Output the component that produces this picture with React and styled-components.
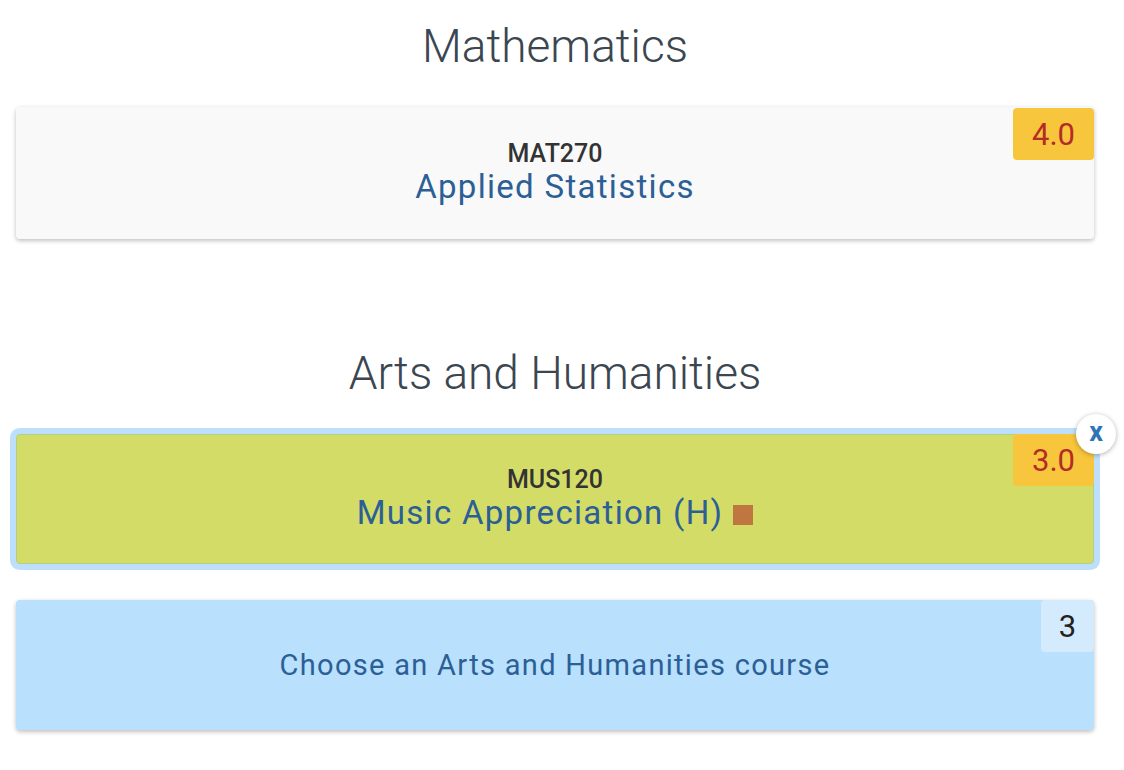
import React from "react";
import styled, { createGlobalStyle } from "styled-components";

const GlobalStyle = createGlobalStyle`
  html, body {
    margin: 0;
    padding: 0;
    background: #ffffff;
    font-family: Roboto, "Liberation Sans", sans-serif;
  }
`;

const Page = styled.div`
  width: 1078px;
  padding: 0 30px 40px 16px;
`;

const Section = styled.section`
  display: flex;
  flex-direction: column;
  gap: 36px;
  margin-top: ${(p) => (p.$first ? "18px" : "106px")};
`;

const Heading = styled.h2`
  margin: 0 0 -3px;
  font-size: 46px;
  line-height: 56px;
  font-weight: 300;
  color: #3b4651;
  text-align: center;
`;

const Card = styled.div`
  position: relative;
  box-sizing: border-box;
  height: ${(p) => p.$height || 132}px;
  border-radius: 4px;
  background: ${(p) => p.$bg};
  border: ${(p) => (p.$selected ? "1px solid #b3cf86" : "none")};
  box-shadow: ${(p) =>
    p.$selected
      ? "0 0 0 6px #bddffb"
      : "0 2px 4px rgba(0, 0, 0, 0.22), 0 0 6px rgba(0, 0, 0, 0.04)"};
  display: flex;
  flex-direction: column;
  align-items: center;
  justify-content: center;
`;

const Code = styled.div`
  font-size: 25px;
  line-height: 28px;
  font-weight: 500;
  color: #333333;
`;

const Title = styled.div`
  font-size: 33px;
  line-height: 38px;
  font-weight: 400;
  letter-spacing: 1.3px;
  color: #2c5f96;
  display: flex;
  align-items: center;
`;

const Prompt = styled.div`
  font-size: 29px;
  line-height: 34px;
  font-weight: 400;
  letter-spacing: 0.045em;
  color: #2c5f96;
`;

const Honors = styled.span`
  display: inline-block;
  width: 20px;
  height: 20px;
  margin-left: 10px;
  margin-top: 4px;
  background: #bf7641;
`;

const Badge = styled.div`
  position: absolute;
  top: ${(p) => (p.$selected ? "-1px" : p.$narrow ? "0" : "1px")};
  right: ${(p) => (p.$selected ? "-1px" : "0")};
  width: ${(p) => (p.$narrow ? "53px" : "81px")};
  height: 52px;
  border-radius: 4px;
  background: ${(p) => (p.$narrow ? "#d3ebfc" : "#f8c63c")};
  color: ${(p) => (p.$narrow ? "#222222" : "#b32d26")};
  font-size: 31px;
  display: flex;
  align-items: center;
  justify-content: center;
`;

const Remove = styled.button`
  position: absolute;
  top: -21px;
  right: -23px;
  width: 40px;
  height: 40px;
  border: none;
  border-radius: 50%;
  background: #ffffff;
  box-shadow: 0 1px 5px rgba(0, 0, 0, 0.3);
  color: #2f74b6;
  font-family: Roboto, "Liberation Sans", sans-serif;
  font-size: 27px;
  font-weight: 700;
  line-height: 1;
  padding: 0 0 4px;
  cursor: pointer;
`;

export default function App() {
  return (
    <Page>
      <GlobalStyle />
      <Section $first>
        <Heading>Mathematics</Heading>
        <Card $bg="#f9f9f9">
          <Badge>4.0</Badge>
          <Code>MAT270</Code>
          <Title>Applied Statistics</Title>
        </Card>
      </Section>
      <Section>
        <Heading>Arts and Humanities</Heading>
        <Card $bg="#d3dc67" $selected $height={130}>
          <Badge $selected>3.0</Badge>
          <Remove>x</Remove>
          <Code>MUS120</Code>
          <Title>
            Music Appreciation (H)
            <Honors />
          </Title>
        </Card>
        <Card $bg="#b9e0fd" $height={130}>
          <Badge $narrow>3</Badge>
          <Prompt>Choose an Arts and Humanities course</Prompt>
        </Card>
      </Section>
    </Page>
  );
}
